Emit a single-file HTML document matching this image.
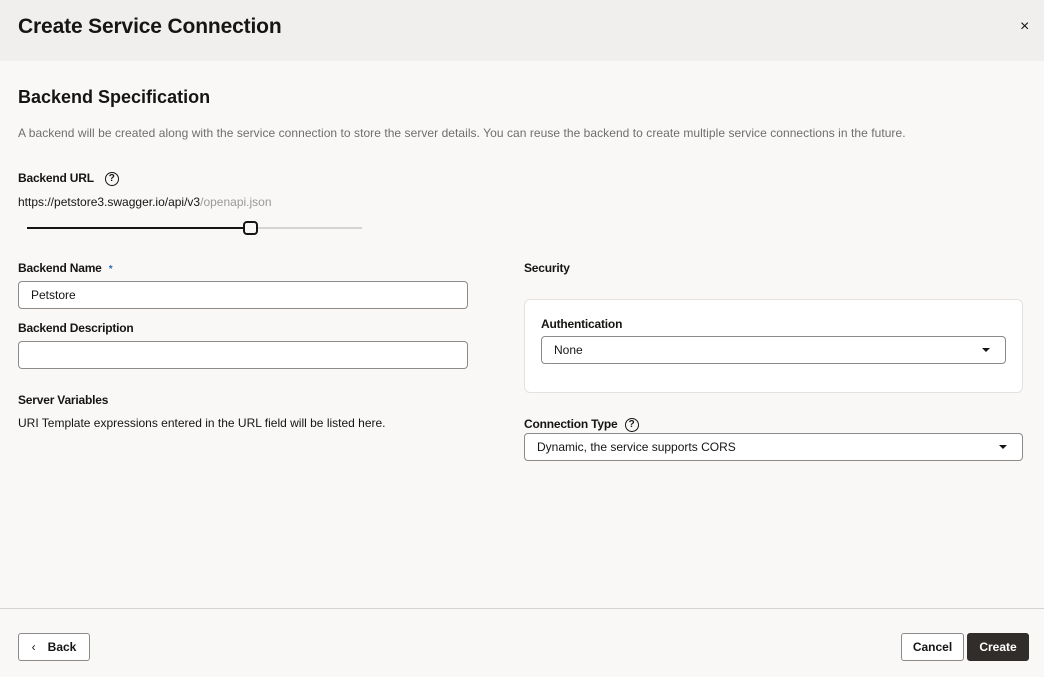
<!DOCTYPE html>
<html><head><style>
*{box-sizing:border-box;margin:0;padding:0}
body{width:1044px;height:677px;background:#f9f8f6;font-family:"Liberation Sans",sans-serif;color:#161513;position:relative;overflow:hidden;font-size:12px}
.a{position:absolute;white-space:nowrap}
.hdr{position:absolute;left:0;top:0;width:1044px;height:61px;background:#f1efed}
.lbl{font-size:12px;font-weight:bold;color:#161513;letter-spacing:-0.2px}
.inp{position:absolute;background:#fff;border:1px solid #8c8b89;border-radius:4px;font-size:12px;padding-left:12px;display:flex;align-items:center}
.q{display:inline-block;width:14px;height:14px;border:1.5px solid #161513;border-radius:50%;font-size:10px;text-align:center;line-height:11px;font-weight:bold;vertical-align:middle}
.caret{position:absolute;right:15px;top:50%;margin-top:-2px;border-left:4px solid transparent;border-right:4px solid transparent;border-top:4px solid #161513}
.btn{position:absolute;border:1px solid #8c8b89;border-radius:3px;background:#fff;font-size:12px;font-weight:bold;display:flex;align-items:center;justify-content:center}
</style></head><body>
<div class="hdr"></div>
<div class="a" style="left:18px;top:15px;font-size:21px;font-weight:bold;letter-spacing:-0.15px">Create Service Connection</div>
<div class="a" style="left:1020px;top:18px;font-size:16px">×</div>
<div class="a" style="left:18px;top:87px;font-size:18px;font-weight:bold">Backend Specification</div>
<div class="a" style="left:18px;top:126px;font-size:12px;color:#6f6e6c;letter-spacing:0.05px">A backend will be created along with the service connection to store the server details. You can reuse the backend to create multiple service connections in the future.</div>
<div class="a lbl" style="left:18px;top:171px">Backend URL <span class="q" style="margin-left:8px">?</span></div>
<div class="a" style="left:18px;top:195px">https://petstore3.swagger.io/api/v3<span style="color:#9a9997">/openapi.json</span></div>
<div class="a" style="left:27px;top:227px;width:335px;height:2px;background:#d6d4d2"></div>
<div class="a" style="left:27px;top:227px;width:222px;height:2px;background:#161513"></div>
<div class="a" style="left:243px;top:221px;width:15px;height:14px;border:2px solid #161513;border-radius:4px;background:#f9f8f6"></div>
<div class="a lbl" style="left:18px;top:261px">Backend Name <span style="color:#2f6eb5;font-size:10px;margin-left:4px">*</span></div>
<div class="inp" style="left:18px;top:281px;width:450px;height:28px">Petstore</div>
<div class="a lbl" style="left:18px;top:321px">Backend Description</div>
<div class="inp" style="left:18px;top:341px;width:450px;height:28px"></div>
<div class="a lbl" style="left:18px;top:393px">Server Variables</div>
<div class="a" style="left:18px;top:416px">URI Template expressions entered in the URL field will be listed here.</div>
<div class="a lbl" style="left:524px;top:261px">Security</div>
<div class="a" style="left:524px;top:299px;width:499px;height:94px;background:#fff;border:1px solid #e4e2e0;border-radius:6px"></div>
<div class="a lbl" style="left:541px;top:317px">Authentication</div>
<div class="inp" style="left:541px;top:336px;width:465px;height:28px">None<span class="caret"></span></div>
<div class="a lbl" style="left:524px;top:417px">Connection Type <span class="q" style="margin-left:4px">?</span></div>
<div class="inp" style="left:524px;top:433px;width:499px;height:28px">Dynamic, the service supports CORS<span class="caret"></span></div>
<div class="a" style="left:0;top:608px;width:1044px;height:1px;background:#d6d4d2"></div>
<div class="btn" style="left:18px;top:633px;width:72px;height:28px"><span style="font-weight:normal;margin-right:12px">‹</span>Back</div>
<div class="btn" style="left:901px;top:633px;width:63px;height:28px">Cancel</div>
<div class="btn" style="left:967px;top:633px;width:62px;height:28px;background:#312d2a;border-color:#312d2a;color:#fff">Create</div>
</body></html>
